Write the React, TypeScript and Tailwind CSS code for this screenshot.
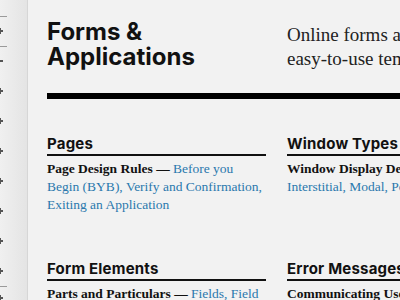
const sidebarMarks = [
  {type: 'line', top: 16},
  {type: 'plus', top: 31},
  {type: 'line', top: 46},
  {type: 'minus', top: 61},
  {type: 'plus', top: 91},
  {type: 'plus', top: 121},
  {type: 'plus', top: 151},
  {type: 'plus', top: 181},
  {type: 'plus', top: 211},
  {type: 'plus', top: 241},
  {type: 'plus', top: 271},
  {type: 'line', top: 286},
  {type: 'plus', top: 298},
];

function Sidebar() {
  return (
    <aside className="relative h-full w-[28px] shrink-0 border-r border-[#d6d6d6] bg-gradient-to-r from-[#f0f0f0] to-[#e4e4e4]">
      {sidebarMarks.map((m, i) => {
        if (m.type === 'line') {
          return (
            <div
              key={i}
              className="absolute left-0 h-px w-[7px] bg-[#9a9a9a]"
              style={{top: m.top}}
            />
          );
        }
        return (
          <div key={i} className="absolute left-0" style={{top: m.top - 3}}>
            <div className="absolute left-0 top-[2px] h-[2px] w-[3px] bg-[#555]" />
            {m.type === 'plus' && (
              <div className="absolute left-0 top-0 h-[6px] w-[1px] bg-[#555]" />
            )}
          </div>
        );
      })}
    </aside>
  );
}

interface SectionProps {
  title: string;
  lead: string;
  links: string;
}

function Section({title, lead, links}: SectionProps) {
  return (
    <section className="w-[219px] shrink-0">
      <h2 className="whitespace-nowrap border-b-2 border-[#111] pb-[1px] font-['Inter',sans-serif] text-[15px] font-bold leading-[18px] tracking-[0.2px] text-[#111]">
        {title}
      </h2>
      <p className="mt-[4px] font-['Liberation_Serif',serif] text-[13.5px] leading-[18px] text-[#2a78ad]">
        <span className="font-bold text-[#111]">{lead} — </span>
        {links}
      </p>
    </section>
  );
}

export default function App() {
  return (
    <div className="flex h-[300px] w-[400px] overflow-hidden bg-[#f2f2f2]">
      <Sidebar />
      <main className="flex min-w-0 flex-1 flex-col overflow-hidden pl-[19px] pt-[19px]">
        <header className="flex">
          <h1 className="w-[240px] shrink-0 font-['Inter',sans-serif] text-[24px] font-bold leading-[25px] text-[#111]">
            Forms &amp;
            <br />
            Applications
          </h1>
          <p className="mt-[4px] whitespace-nowrap font-['Liberation_Serif',serif] text-[19px] leading-[24px] text-[#222]">
            Online forms and applications
            <br />
            easy-to-use templates
          </p>
        </header>
        <div className="mt-[22px] h-[6px] w-[400px] shrink-0 bg-black" />
        <div className="mt-[36px] flex gap-[21px]">
          <Section
            title="Pages"
            lead="Page Design Rules"
            links="Before you Begin (BYB), Verify and Confirmation, Exiting an Application"
          />
          <Section
            title="Window Types"
            lead="Window Display Decisions"
            links="Interstitial, Modal, Pop-up Windows"
          />
        </div>
        <div className="mt-[46px] flex gap-[21px]">
          <Section
            title="Form Elements"
            lead="Parts and Particulars"
            links="Fields, Field Groups, Labels, Buttons"
          />
          <Section
            title="Error Messages"
            lead="Communicating Users' Errors"
            links="Inline and Page Errors"
          />
        </div>
      </main>
    </div>
  );
}
